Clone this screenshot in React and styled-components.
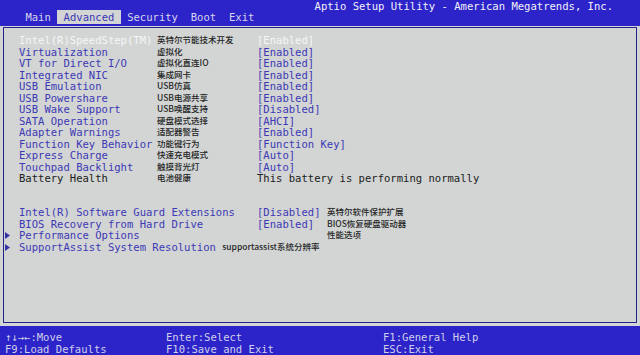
import React from "react";
import styled, { createGlobalStyle } from "styled-components";

const Global = createGlobalStyle`
  html, body { margin: 0; padding: 0; background: #2c23c9; }
  #root { width: 640px; height: 355px; overflow: hidden; }
`;

const MONO = `"DejaVu Sans Mono", "Liberation Mono", monospace`;
const CJK = `"Noto Sans CJK SC", "Noto Sans", sans-serif`;

const Screen = styled.div`
  width: 640px;
  height: 355px;
  display: flex;
  flex-direction: column;
  font-family: ${MONO};
  font-size: 10.55px;
`;

const TopBar = styled.div`
  height: 26px;
  background: #2c23c9;
  display: flex;
  flex-direction: column;
`;

const TitleRow = styled.div`
  height: 10px;
  line-height: 12px;
  display: flex;
  justify-content: flex-end;
  padding-right: 27px;
  color: #f2f2fa;
`;

const TabRow = styled.div`
  height: 14px;
  display: flex;
  padding-left: 19px;
`;

const Tab = styled.div`
  padding: 0 6.4px;
  line-height: 14px;
  color: ${(p) => (p.$active ? "#3a36b4" : "#d6d6ec")};
  background: ${(p) => (p.$active ? "#d2d5d4" : "transparent")};
`;

const PanelWrap = styled.div`
  height: 300px;
  background: #d2d5d4;
  padding: 1px 3px 3px 3px;
  box-sizing: border-box;
  display: flex;
`;

const Panel = styled.div`
  flex: 1;
  border: 1px solid #23238a;
  padding-top: 7px;
  display: flex;
  flex-direction: column;
`;

const Section = styled.div`
  display: flex;
  flex-direction: column;
  margin-top: ${(p) => p.$gap || 0}px;
`;

const Row = styled.div`
  display: grid;
  grid-template-columns: ${(p) => p.$cols};
  height: 11.5px;
  line-height: 11.5px;
  white-space: nowrap;
`;

const Arrow = styled.div`
  display: flex;
  align-items: center;
  padding-left: 1px;
`;

const Label = styled.div`
  color: ${(p) => (p.$sel ? "#f6f6f8" : p.$plain ? "#1b1b1b" : "#3d38b4")};
`;

const Value = styled.div`
  color: ${(p) => (p.$sel ? "#f6f6f8" : p.$plain ? "#1b1b1b" : "#3d38b4")};
`;

const Cn = styled.span`
  font-family: ${CJK};
  font-size: 8.5px;
  line-height: 11.5px;
  color: #262626;
  font-weight: 500;
  position: relative;
  top: -1px;
`;

const Footer = styled.div`
  height: 29px;
  background: #2c23c9;
  box-sizing: border-box;
  padding: 5px 0 0 5px;
  display: grid;
  grid-template-columns: 161px 217px auto;
  grid-auto-rows: 12px;
  line-height: 12px;
  color: #cfd0ea;
`;

const ArrowIcon = () => (
  <svg width="5" height="7" viewBox="0 0 5 7">
    <path d="M0 0 L5 3.5 L0 7 Z" fill="#3535a8" />
  </svg>
);

const COLS1 = "15px 138px 100px 1fr";
const COLS2 = "15px 238px 70px 1fr";

const items = [
  ["Intel(R)SpeedStep(TM)", "英特尔节能技术开发", "[Enabled]", "sel"],
  ["Virtualization", "虚拟化", "[Enabled]"],
  ["VT for Direct I/O", "虚拟化直连IO", "[Enabled]"],
  ["Integrated NIC", "集成网卡", "[Enabled]"],
  ["USB Emulation", "USB仿真", "[Enabled]"],
  ["USB Powershare", "USB电源共享", "[Enabled]"],
  ["USB Wake Support", "USB唤醒支持", "[Disabled]"],
  ["SATA Operation", "硬盘模式选择", "[AHCI]"],
  ["Adapter Warnings", "适配器警告", "[Enabled]"],
  ["Function Key Behavior", "功能键行为", "[Function Key]"],
  ["Express Charge", "快速充电模式", "[Auto]"],
  ["Touchpad Backlight", "触摸背光灯", "[Auto]"],
  ["Battery Health", "电池健康", "This battery is performing normally", "plain"],
];

export default function App() {
  return (
    <Screen>
      <Global />
      <TopBar>
        <TitleRow>Aptio Setup Utility - American Megatrends, Inc.</TitleRow>
        <TabRow>
          <Tab>Main</Tab>
          <Tab $active>Advanced</Tab>
          <Tab>Security</Tab>
          <Tab>Boot</Tab>
          <Tab>Exit</Tab>
        </TabRow>
      </TopBar>
      <PanelWrap>
        <Panel>
          <Section>
            {items.map(([l, c, v, k]) => (
              <Row key={l} $cols={COLS1}>
                <span />
                <Label $sel={k === "sel"} $plain={k === "plain"}>{l}</Label>
                <Cn>{c}</Cn>
                <Value $sel={k === "sel"} $plain={k === "plain"}>{v}</Value>
              </Row>
            ))}
          </Section>
          <Section $gap={22.5}>
            <Row $cols={COLS2}>
              <span />
              <Label>Intel(R) Software Guard Extensions</Label>
              <Value>[Disabled]</Value>
              <Cn>英特尔软件保护扩展</Cn>
            </Row>
            <Row $cols={COLS2}>
              <span />
              <Label>BIOS Recovery from Hard Drive</Label>
              <Value>[Enabled]</Value>
              <Cn>BIOS恢复硬盘驱动器</Cn>
            </Row>
            <Row $cols={COLS2}>
              <Arrow><ArrowIcon /></Arrow>
              <Label>Performance Options</Label>
              <span />
              <Cn>性能选项</Cn>
            </Row>
            <Row $cols={COLS2}>
              <Arrow><ArrowIcon /></Arrow>
              <Label>
                SupportAssist System Resolution <Cn>supportassist系统分辨率</Cn>
              </Label>
              <span />
              <span />
            </Row>
          </Section>
        </Panel>
      </PanelWrap>
      <Footer>
        <div>↑↓→←:Move</div>
        <div>Enter:Select</div>
        <div>F1:General Help</div>
        <div>F9:Load Defaults</div>
        <div>F10:Save and Exit</div>
        <div>ESC:Exit</div>
      </Footer>
    </Screen>
  );
}
